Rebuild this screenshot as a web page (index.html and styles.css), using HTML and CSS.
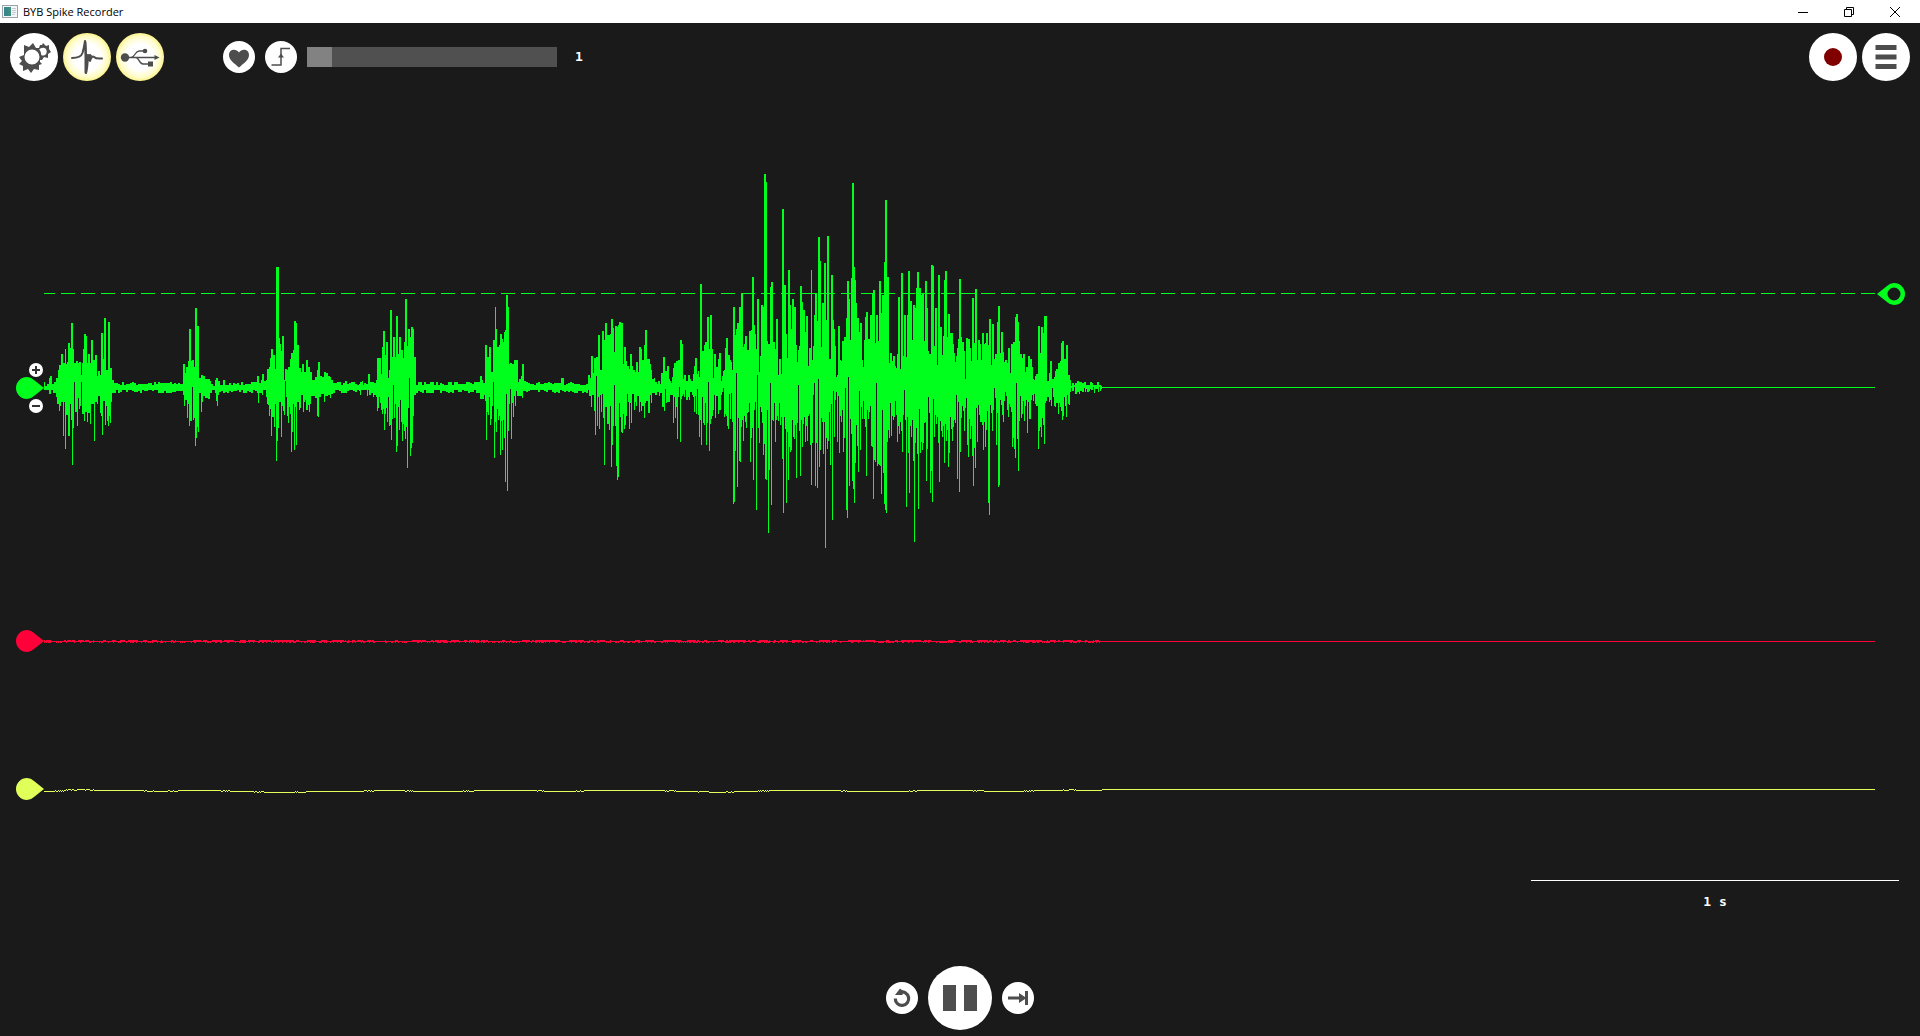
FILE: index.html
```html
<!DOCTYPE html>
<html lang="en">
<head>
<meta charset="utf-8">
<title>BYB Spike Recorder</title>
<link rel="stylesheet" href="styles.css">
</head>
<body>
<header class="titlebar">
  <svg class="app-icon" width="16" height="13" viewBox="0 0 16 13"><rect x=".5" y=".5" width="15" height="12" fill="#f4f6f8" stroke="#9aa3ab"/><rect x="2" y="2" width="7" height="9" fill="#3c8f7c"/><path d="M2 2h4v9H2z" fill="#3a7f9c" opacity=".6"/><path d="M10 3.500h4M10 5.500h4M10 7.500h4M10 9.500h3" stroke="#c3c9ce"/></svg>
  <h1 class="app-title">BYB Spike Recorder</h1>
  <div class="window-controls">
    <button class="window-button" aria-label="Minimize"><svg width="12" height="12"><path d="M1 6.500h10"/></svg></button>
    <button class="window-button" aria-label="Restore"><svg width="12" height="12"><path d="M1.500 3.500h7v7h-7zM3.500 3.500v-2h7v7h-2"/></svg></button>
    <button class="window-button" aria-label="Close"><svg width="12" height="12"><path d="M1 1l10 10M11 1L1 11"/></svg></button>
  </div>
</header>
<main class="recorder">
  <nav class="toolbar">
    <button class="round large" aria-label="Settings">
      <svg viewBox="0 0 48 48"><path fill="#4d4d4d" fill-rule="evenodd" d="M14 12l5 2 4-4 3 5 3 0 1-3 2 0 1-2 3 3 3-1 0 4 2 3-3 2 0 4-4-1-2 3-2 0 0 2 2 2-3 1 0 5-5-1-3 4-3-4-5 2 0-5-4-2 3-3-3-4 5-2zM22 16.500a7.500 7.500 0 1 0 0 15a7.500 7.500 0 1 0 0-15zM33.200 14.800c-1.800 0-3 .8-4 1.700c1.400 1.500 2 3.500 2 5.500c3 1.500 5.500-.4 5.500-3.600c0-2-1.500-3.600-3.500-3.600z"/></svg>
    </button>
    <button class="round large active" aria-label="Spike view">
      <svg viewBox="0 0 48 48"><path fill="none" stroke="#4d4d4d" stroke-width="2" stroke-linejoin="round" stroke-linecap="round" d="M9 25C14 25 18 24.500 19.500 20Q21 15 22 8Q22.800 24 23 40Q24.300 37 25 23L27 22 27 28Q29 22 31 24T39 25.500"/><path fill="#4d4d4d" d="M22 7l1.500 2 .5 12 5 1-2 6-2 0-2 13-1.500-1z"/></svg>
    </button>
    <button class="round large active" aria-label="USB device">
      <svg viewBox="0 0 48 48"><g fill="none" stroke="#4d4d4d" stroke-width="1.300"><path d="M9 24.500h30M15 24.500c4 0 4-6.500 8-6.500h5M20 24.500c3 0 3 6.500 7 6.500h5"/></g><g fill="#4d4d4d"><circle cx="9" cy="24.500" r="4.200"/><circle cx="29" cy="18" r="2.300"/><path d="M32 28.500h5v5h-5zM38.500 22l5 2.500-5 2.500z"/></g></svg>
    </button>
    <button class="round small heart" aria-label="Heart rate">
      <svg viewBox="0 0 32 32"><path fill="#4d4d4d" d="M16 26.500C11 22 6 19 6 14c0-6 7-7 10-2.500C19 7 26 8 26 14c0 5-5 8-10 12.500z"/></svg>
    </button>
    <button class="round small" aria-label="Threshold trigger">
      <svg viewBox="0 0 32 32"><path fill="none" stroke="#4d4d4d" stroke-width="1.500" d="M6.500 24H16V7.500h9"/><path fill="#4d4d4d" d="M13 16.500l3-4 3 4z"/></svg>
    </button>
    <input class="average-slider" id="average" type="range" min="1" max="50" value="1" aria-label="Spikes averaged">
    <output class="average-value" for="average">1</output>
    <div class="toolbar-end">
      <button class="round large" aria-label="Record"><svg viewBox="0 0 48 48"><circle cx="24" cy="24" r="9" fill="#800000"/></svg></button>
      <button class="round large" aria-label="Menu"><svg viewBox="0 0 48 48"><path fill="#4d4d4d" d="M13.500 12h21v5h-21zM13.500 21.500h21v5h-21zM13.500 31h21v5h-21z"/></svg></button>
    </div>
  </nav>

  <section class="channels">
    <div class="channel channel-1">
      <div class="gutter">
        <button class="gain plus" aria-label="Increase gain"><svg width="14" height="14"><path d="M3 7h8M7 3v8"/></svg></button>
        <button class="handle" aria-label="Channel 1"><svg width="28" height="22"><path d="M11 0a11 11 0 1 0 0 22q4 0 7-3l10-8-10-8q-3-3-7-3z"/></svg></button>
        <button class="gain minus" aria-label="Decrease gain"><svg width="14" height="14"><path d="M3 7h8"/></svg></button>
      </div>
      <svg class="plot" id="plot-1"><line class="threshold" x1="0" y1="119.500" x2="100%" y2="119.500"/><line class="flat" x1="1058" y1="213.500" x2="100%" y2="213.500"/><path class="trace" id="trace-1"/></svg>
      <button class="threshold-handle" aria-label="Threshold"><svg width="28" height="22"><path fill-rule="evenodd" d="M17 0a11 11 0 1 1 0 22q-4 0-7-3L0 11l10-8q3-3 7-3zM17 4.500a6.500 6.500 0 1 0 0 13a6.500 6.500 0 1 0 0-13z"/></svg></button>
    </div>
    <div class="channel channel-2">
      <div class="gutter">
        <button class="handle" aria-label="Channel 2"><svg width="28" height="22"><path d="M11 0a11 11 0 1 0 0 22q4 0 7-3l10-8-10-8q-3-3-7-3z"/></svg></button>
      </div>
      <svg class="plot" id="plot-2"><line class="flat" x1="0" y1="39.500" x2="100%" y2="39.500"/><path class="trace" id="trace-2"/></svg>
    </div>
    <div class="channel channel-3">
      <div class="gutter">
        <button class="handle" aria-label="Channel 3"><svg width="28" height="22"><path d="M11 0a11 11 0 1 0 0 22q4 0 7-3l10-8-10-8q-3-3-7-3z"/></svg></button>
      </div>
      <svg class="plot" id="plot-3"><line class="flat" x1="1058" y1="39.500" x2="100%" y2="39.500"/><path class="trace" id="trace-3"/></svg>
    </div>
  </section>

  <div class="time-scale">1 s</div>

  <footer class="transport">
    <button class="round small" aria-label="Back"><svg viewBox="0 0 32 32"><path fill="none" stroke="#4d4d4d" stroke-width="3.200" d="M9.300 16.500A6.700 6.700 0 1 0 14 10.300"/><path fill="#4d4d4d" d="M9 13l5-6.500 3 2.500-.5 4z"/></svg></button>
    <button class="round pause" aria-label="Pause"><svg viewBox="0 0 64 64"><path fill="#4d4d4d" d="M15 19h13v26H15zM36 19h13v26H36z"/></svg></button>
    <button class="round small" aria-label="Jump to live"><svg viewBox="0 0 32 32"><path fill="#4d4d4d" d="M6 14.500h11V11l6 4V9h3v14h-3v-6l-6 4v-3.500H6z"/></svg></button>
  </footer>
</main>
<script src="traces.js"></script>
</body>
</html>
```
FILE: styles.css
```css
* {
  box-sizing: border-box;
}

body {
  margin: 0;
  min-height: 100vh;
  display: flex;
  flex-direction: column;
  background: #1a1a1a;
  color: #fff;
  font-family: "Open Sans", "Noto Sans", sans-serif;
}

button {
  margin: 0;
  padding: 0;
  border: 0;
  background: none;
  cursor: pointer;
}

svg {
  display: block;
}

.titlebar {
  display: flex;
  align-items: center;
  height: 23px;
  padding: 0 2px;
  background: #fff;
  color: #000;
}

.app-title {
  margin: 0 0 0 5px;
  font-size: 11px;
  line-height: 16px;
  font-weight: 400;
}

.window-controls {
  display: flex;
  margin-left: auto;
}

.window-button {
  display: grid;
  place-items: center;
  width: 46px;
  height: 20px;
}

.window-button path {
  fill: none;
  stroke: #000;
}

.recorder {
  flex: 1;
  display: flex;
  flex-direction: column;
}

.toolbar {
  display: flex;
  align-items: center;
  gap: 5px;
  padding: 10px 10px 0;
}

.toolbar-end {
  display: flex;
  gap: 5px;
  margin-left: auto;
}

.round {
  flex: none;
  border-radius: 50%;
  background: #fff;
}

.round svg {
  width: 100%;
  height: 100%;
}

.large {
  width: 48px;
  height: 48px;
}

.small {
  width: 32px;
  height: 32px;
}

.pause {
  width: 64px;
  height: 64px;
}

.active {
  background: radial-gradient(circle closest-side, #fff 55%, #fffcc8 85%, #faf28c 100%);
}

.heart {
  margin: 0 5px 0 54px;
}

.average-slider {
  appearance: none;
  width: 250px;
  height: 20px;
  margin: 0 0 0 5px;
  background: #505050;
}

.average-slider::-webkit-slider-thumb {
  appearance: none;
  width: 25px;
  height: 20px;
  background: #828282;
}

.average-value,
.time-scale {
  font: bold 13px/16px "DejaVu Sans Mono", monospace;
}

.average-value {
  margin-left: 13px;
}

.channels {
  display: flex;
  flex-direction: column;
  padding-top: 93px;
}

.channel {
  position: relative;
  display: flex;
  height: 78px;
  padding-right: 45px;
}

.channel-1 {
  height: 428px;
  color: #00ff1c;
}

.channel-2 {
  color: #ff0038;
}

.channel-3 {
  margin-top: 70px;
  color: #e1ff59;
}

.gutter {
  position: relative;
  display: flex;
  align-items: center;
  width: 44px;
  padding-left: 16px;
}

.handle,
.threshold-handle {
  color: inherit;
}

.handle path,
.threshold-handle path {
  fill: currentColor;
}

.gain {
  position: absolute;
  left: 29px;
  width: 14px;
  height: 14px;
  border-radius: 50%;
  background: #fff;
}

.gain path {
  stroke: #333;
  stroke-width: 2;
}

.plus {
  top: 189px;
}

.minus {
  top: 225px;
}

.threshold-handle {
  position: absolute;
  top: 109px;
  right: 15px;
}

.plot {
  flex: 1;
  min-width: 0;
  height: 100%;
  overflow: hidden;
  shape-rendering: crispEdges;
}

.plot line {
  stroke: currentColor;
}

.threshold {
  stroke-dasharray: 14 6;
  stroke-dashoffset: 3;
}

.trace {
  fill: currentColor;
}

.time-scale {
  align-self: flex-end;
  width: 368px;
  margin: 52px 21px 0 0;
  padding-top: 13px;
  border-top: 1px solid #fff;
  text-align: center;
}

.transport {
  display: flex;
  justify-content: center;
  align-items: center;
  gap: 10px;
  margin-top: auto;
  padding: 20px 0 6px;
}
```
FILE: traces.js
```js
// Envelope of channel 1, stored at three units per pixel.
// Every entry is "position:level", held until the next one; "position~" starts a quiet stretch.
const segments = [
  {
    origin: -44, end: 1080, base: 321,
    top: "129:306 135:318 141:311 147:294 150:288 156:311 162:306 168:294 174:270 177:255 183:222 189:249 195:207 198:252 201:246 204:189 210:204 213:129 219:207 222:249 228:243 234:249 237:246 243:285 246:249 249:207 252:162 258:168 261:249 264:222 270:249 273:180 279:240 285:225 291:288 294:273 300:285 303:159 309:237 312:114 318:270 324:126 330:264 336:300 342:309 348~ 546:312 549:252 555:279 558:261 564:243 567:147 573:243 576:240 582:261 585:84 591:138 597:294 603:285 609:288 615:297 630:303 633:312 640:318 645:300 649:294 654:303 660:315 669:300 675~ 741:312 753:306 771:288 777:309 783:300 786:282 792:303 798:300 801:267 807:261 810:234 813:207 819:225 825:267 828:-39 837:174 840:192 843:213 846:168 852:300 855:267 861:270 864:261 870:237 873:219 879:210 882:123 888:129 891:195 897:264 903:276 906:252 912:276 918:240 924:261 930:276 936:300 945:291 950:270 954:246 960:288 966:291 972:276 978:279 984:288 990:291 993:300 999:309 1005~ 1035:303 1041~",
    bottom: "129:330 147:342 153:330 159:339 168:351 171:372 177:393 180:378 183:366 189:468 192:366 195:507 198:405 204:468 210:372 213:420 216:555 219:444 222:306 225:396 231:438 234:354 237:387 240:378 243:306 246:402 252:423 255:396 261:426 264:399 270:432 273:372 282:483 285:366 291:372 294:348 300:399 303:408 306:465 309:363 315:435 318:378 321:423 324:438 327:408 330:429 333:366 336:339 342~ 549:345 552:378 555:360 561:414 564:372 567:438 570:423 576:321 579:420 582:414 585:498 588:474 591:441 594:456 597:339 603:396 606:366 609:348 615:354 624:357 630:339 636:330 645:339 648:363 651:378 654:345 657~ 774:369 777:339 786:345 789:330 798:351 801:372 804:375 807:408 810:387 813:468 816:411 822:441 825:372 828:543 831:483 834:444 837:366 843:471 846:378 849:393 852:405 855:303 858:351 861:408 864:429 867:381 870:402 873:516 876:456 879:372 882:510 885:381 888:495 891:366 897:390 900:384 903:345 909:396 912:366 915:360 918:390 924:375 927:396 930:372 933:348 945:354 951:408 954:411 957:351 963:342 972:366 975:348 984:345 990:354 993:342 999~"
  },
  {
    origin: 316, end: 960, base: 321,
    top: "0:306 6:303 9:315 12:309 18:312 24:282 30:306 42:309 48:300 51:234 63:282 66:201 69:153 75:225 78:186 84:294 87:270 90:90 96:231 99:171 105:231 108:108 114:222 117:171 123:210 129:234 132:186 135:57 141:198 144:147 150:171 153:141 159:147 162:231 168~ 360:288 366:300 369:309 375:195 381:231 387:201 393:276 399:180 405:81 408:147 411:201 417:195 420:162 426:177 429:186 432:156 435:150 438:45 444:81 447:252 450:249 456:252 462:240 474:306 477:297 483:288 486:252 492:303 498~ 603:294 612~ 684:285 690:294 693:228 699:279 702:234 708:231 714:165 720:270 726:153 732:180 735:129 741:165 750:162 753:117 759:144 762:216 765:138 771:141 774:135 777:126 783:129 789:252 792:201 798:243 801:258 807:267 810:222 816:258 819:270 825:276 828:246 834:276 837:201 843:207 846:240 852:195 855:150 861:237 870:252 873:270 876:297 882:294 885:306 891:312 894:303 900:312 903:279 909:231 915:273 921:258 927:297 930:303 933:309 936:291 939:264 942:249 948:243 954:240",
    bottom: "0:345 3:330 21:348 24:330 27:345 33:339 39:351 42:345 48:351 51:393 54:384 57:351 60:369 63:390 66:402 69:387 72:450 75:402 78:384 81:426 84:351 87:438 90:435 93:480 96:417 99:315 102:414 105:372 108:516 111:498 114:381 117:450 120:360 123:426 126:483 129:432 132:453 135:477 138:441 141:564 144:384 147:294 150:528 153:504 156:489 159:408 162:345 168~ 360:357 372:345 375:363 378:480 381:396 384:405 387:351 390:435 393:417 396:378 399:306 402:534 405:426 408:456 411:387 414:420 417:408 420:525 423:423 426:510 429:420 432:474 435:606 438:342 441:633 444:453 447:372 450:327 453:477 456:369 459:411 462:348 465:378 468:333 471:348 480:348 486:354 489:333 498~ 687:348 693:381 696:345 702:393 705:465 708:288 711:438 714:351 717:447 720:345 723:396 726:342 729:414 732:555 735:381 741:432 747:450 750:378 753:561 756:495 759:438 762:315 765:438 768:558 771:600 774:591 777:369 780:411 783:456 786:459 789:402 792:447 795:435 798:408 801:342 804:366 807:447 810:369 813:429 816:342 822:390 825:366 828:378 831:348 837:396 840:366 843:393 846:378 852:414 855:369 858:363 864:399 870:345 873:369 876:339 885:345 891:336 897:348 900:339 906:381 912:393 915:327 918:369 921:366 930:345 939:429 942:351 945:414 948:381 951:477 954:351 957:321"
  },
  {
    origin: 636, end: 600, base: 681,
    top: "0:540 6:552 9:657 12:645 18:663 24:645 30:657 33:663 39:642 42:618 45:594 51:642 54:633 57:651 60:372 66:573 72:555 75:546 81:471 87:567 90:465 96:567 99:654 102:582 108:621 114:597 117:579 123:663 126:648 129:633 132:630 135:564 138:534 144:585 150:600 153:606 156:630 159:441 165:525 168:507 171:489 177:441 183:400 189:561 192:552 195:528 201:570 207:513 213:510 216:351 222:495 225:522 228:567 231:417 237:636 240:588 243:435 249:441 252:42 258:66 261:543 264:552 270:381 273:366 279:546 285:567 288:477 294:645 297:597 303:642 306:147 312:375 318:522 321:594 324:330 330:435 333:507 336:417 342:441 348:555 351:606 354:570 357:558 360:378 366:426 369:450 375:516 378:468 384:618 387:564 393:330 396:600 399:558 402:465 405:400 411:483 414:231 420:303 423:561 426:429 432:309 438:480 441:228 447:597 453:345 459:480 462:507 465:558 468:651 471:645 474:498 480:600 483:603 486:543 492:531 498:474 501:363 507:417 510:540 513:354 516:69 522:321 525:360 528:429 531:474 537:516 540:489 546:600 549:621 552:540 555:471 558:456 564:537 570:465 576:400 579:390 585:549 588:465 594:543 597:363",
    bottom: "0:846 3:717 6:708 9:702 12:711 15:690 18:720 24:711 27:720 30:696 36:705 39:711 42:756 45:708 48:762 51:687 54:765 57:831 60:780 63:855 66:711 69:789 72:795 75:729 78:855 81:789 84:666 87:873 90:792 93:777 96:768 99:750 102:705 105:774 108:708 114:762 117:750 123:705 126:696 129:684 132:771 135:762 138:768 141:798 144:807 147:702 150:777 153:699 156:786 159:1032 162:1026 165:873 168:639 171:981 174:774 177:903 180:906 183:801 186:780 189:843 192:768 195:786 198:804 201:759 204:756 207:729 210:906 213:834 216:804 219:960 222:750 225:726 228:1050 231:645 234:804 237:849 240:741 243:756 246:789 249:885 252:852 255:957 258:960 261:750 264:1119 267:930 270:669 273:1035 276:780 279:783 282:729 285:846 288:780 291:768 294:783 297:729 300:795 303:771 306:897 309:1059 312:771 315:807 318:1029 321:816 324:960 327:861 330:876 333:870 336:780 339:831 342:837 345:795 348:954 351:789 354:675 357:813 360:948 363:780 366:861 369:792 372:771 375:846 378:798 381:843 384:768 387:762 390:855 393:975 396:849 399:705 402:669 405:978 408:849 411:984 414:657 417:921 420:870 423:774 426:786 429:882 432:786 435:1164 438:834 441:867 444:843 447:756 450:915 453:732 456:1080 459:693 462:831 465:720 468:696 471:846 474:708 477:879 480:768 483:786 486:750 489:876 492:834 495:684 498:1050 501:1074 504:651 507:978 510:777 513:822 516:963 519:987 522:1029 525:909 528:795 531:858 534:936 537:693 540:870 543:741 546:777 549:723 552:777 555:801 558:948 561:750 564:777 567:756 570:738 573:858 576:861 579:1017 582:900 585:906 588:669 591:918 594:912 597:915"
  },
  {
    origin: 836, end: 666, base: 681,
    top: "0:363 3:459 6:405 12:306 15:120 21:351 27:609 30:579 36:603 39:588 45:618 48:624 51:582 54:411 60:627 63:339 69:588 72:465 78:591 81:465 84:333 90:423 96:540 99:435 105:444 108:384 111:336 117:384 123:405 126:400 132:543 135:363 141:444 144:573 147:582 153:315 159:318 162:558 165:444 171:615 174:345 180:501 186:585 189:528 192:360 195:333 201:531 204:462 210:519 219:552 222:579 225:606 228:588 231:564 234:537 237:357 243:531 246:546 252:573 255:657 258:534 264:537 270:564 273:603 276:414 282:549 285:387 291:600 294:540 300:552 303:600 306:519 312:552 315:549 318:519 324:555 327:477 333:615 336:492 342:597 345:582 351:486 354:438 360:579 363:516 369:576 372:606 375:600 381:609 384:564 390:639 393:552 399:546 405:471 408:462 414:486 417:543 420:582 426:594 429:582 435:636 438:621 444:588 450:597 456:621 459:657 462:660 465:648 468:642 474:498 480:579 483:501 489:519 492:468 501:663 507:639 510:603 516:657 522:651 525:633 528:627 534:609 540:603 543:549 546:543 552:597 558:555 564:645 570:660 573:678 576:669 582:675 585:669 591:663 597:666 606:669 612:666 618:675 630:666 636:669 639:675 651:666 657:675 663:678",
    bottom: "0:918 3:1002 6:750 9:939 12:1032 15:1050 18:1059 21:846 24:810 27:834 30:729 33:828 36:768 39:780 42:771 45:723 48:765 51:846 54:798 57:822 60:786 63:813 66:876 69:765 72:690 75:780 78:1041 81:771 84:879 87:999 90:798 93:831 96:780 99:903 102:1146 105:849 108:804 111:882 114:1047 117:747 120:879 123:846 126:870 129:849 132:789 135:786 138:963 141:867 144:711 147:759 150:999 153:933 156:1026 159:717 162:831 165:765 168:792 171:771 174:849 177:966 180:783 183:813 186:831 189:798 192:909 195:792 198:843 201:810 204:921 207:879 210:771 213:807 216:843 219:801 222:780 225:789 228:705 231:957 234:726 237:996 240:876 243:774 246:738 249:753 252:813 255:744 258:714 261:855 264:891 267:777 270:837 273:798 276:888 279:978 282:864 285:924 288:744 291:846 294:735 297:765 300:786 306:795 309:870 312:786 315:861 318:810 321:753 324:1029 327:1065 330:735 333:759 336:813 339:750 342:684 345:714 348:855 351:759 354:981 357:975 360:720 363:735 366:765 369:786 372:723 375:696 378:708 381:750 384:771 387:732 390:741 393:756 396:861 399:834 402:867 405:894 408:669 411:837 414:933 417:783 420:708 423:774 426:762 429:723 432:783 435:738 438:720 441:819 444:726 447:777 453:720 456:705 459:723 462:702 465:732 468:738 474:867 477:813 480:801 483:831 486:774 489:795 492:852 495:729 498:723 501:711 507:726 510:720 513:738 516:684 519:711 522:738 525:741 528:729 534:762 537:729 540:741 543:753 546:780 549:768 552:711 555:738 558:771 561:705 564:732 567:735 570:696 573:684 576:693 582:681 585:702 591:696 597:702 600:693 606:696 612:684 615:696 618:687 621:696 627:693 630:687 633:690 639:681 642:699 645:687 654:696 657:681 660:693 663:687"
  }
];

let seed = 7;
function random() {
  seed = (seed * 16807) % 2147483647;
  return seed / 2147483647;
}

function column(x, top, height) {
  return `M${x} ${top}h1v${height}h-1z`;
}

// Expands a step list to one level per pixel, measured from the segment's base.
function expand(text, segment, sign) {
  const steps = text.split(" ").map((entry) => {
    const [position, level] = entry.split(/[:~]/);
    return { x: Math.round(position / 3), level: level ? Math.round((level - segment.base) / 3) : null };
  });
  const levels = [];
  steps.forEach((step, i) => {
    const stop = i + 1 < steps.length ? steps[i + 1].x : segment.end / 3;
    let quiet = 3;
    for (let x = step.x; x < stop; x++) {
      if ((x - step.x) % 2 === 0) quiet = sign < 0 ? -(2 + Math.floor(random() * 4)) : 3 + Math.floor(random() * 4);
      levels[x] = step.level === null ? quiet : step.level;
    }
  });
  return levels;
}

function drawSpikes() {
  const baseline = 213;
  let d = "";
  for (const segment of segments) {
    const top = expand(segment.top, segment, -1);
    const bottom = expand(segment.bottom, segment, 1);
    for (let x = 0; x < segment.end / 3; x++) {
      if (top[x] === undefined || bottom[x] === undefined) continue;
      d += column(segment.origin + x, baseline + top[x], Math.max(1, bottom[x] - top[x]));
    }
  }
  document.getElementById("trace-1").setAttribute("d", d);
}

function drawNoise() {
  let d = "";
  let up = 0;
  for (let x = 0; x < 1058; x++) {
    if (random() < 0.4) up = random() < 0.6 ? 1 : 0;
    const down = random() < 0.35 ? 1 : 0;
    d += column(x, 39 - up, 1 + up + down);
  }
  document.getElementById("trace-2").setAttribute("d", d);
}

function drawDrift() {
  // [start, row] of the slow baseline drift
  const drift = [[0, 41], [20, 40], [33, 39], [52, 40], [110, 41], [135, 40], [188, 41], [220, 42], [262, 41], [330, 40], [372, 41], [430, 40], [500, 41], [540, 40], [632, 41], [665, 42], [690, 41], [725, 40], [804, 41], [875, 40], [940, 41], [990, 40], [1024, 39], [1034, 40]];
  let d = "";
  drift.forEach(([start, row], i) => {
    const stop = i + 1 < drift.length ? drift[i + 1][0] : 1058;
    for (let x = start; x < stop; x++) {
      const nearEdge = stop - x < 12 && random() < 0.4;
      const next = i + 1 < drift.length ? drift[i + 1][1] : row;
      d += column(x, nearEdge ? next : row, 1);
    }
  });
  document.getElementById("trace-3").setAttribute("d", d);
}

drawSpikes();
drawNoise();
drawDrift();
```
